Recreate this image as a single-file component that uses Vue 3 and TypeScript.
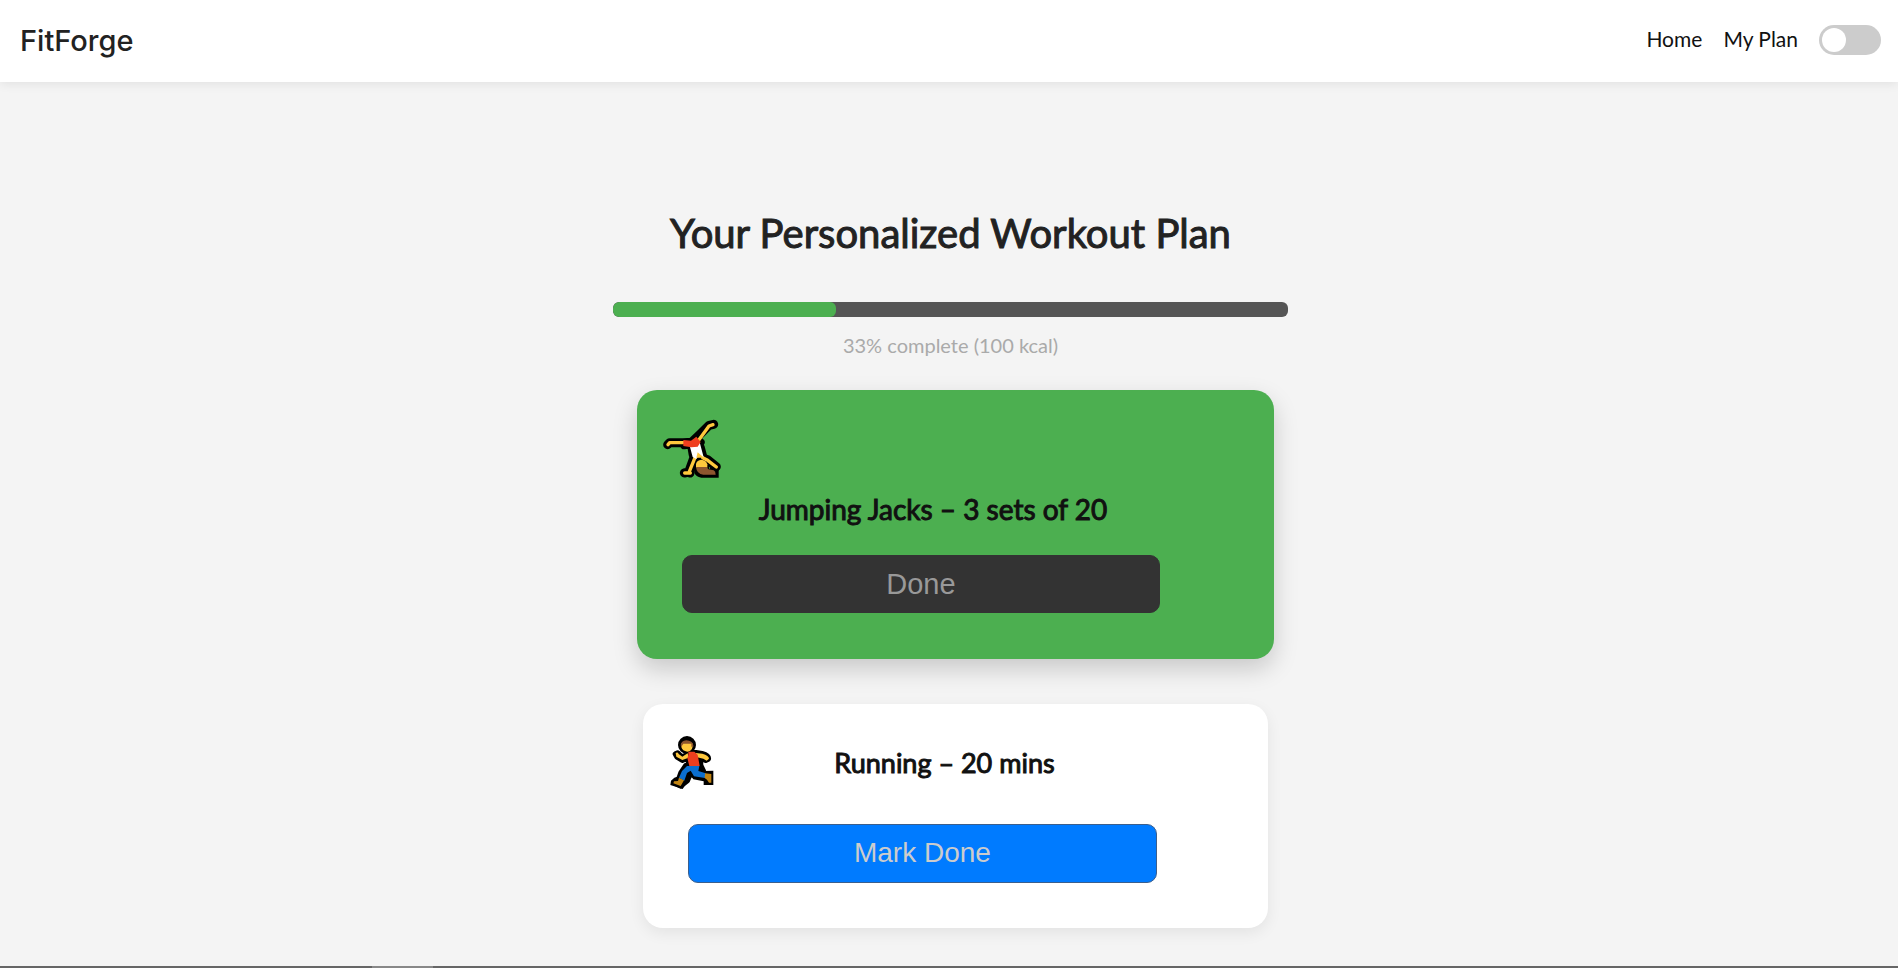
<script setup lang="ts">
import { ref } from 'vue'

interface Exercise {
  id: string
  title: string
  done: boolean
}

const dark = ref(false)
const percent = ref(33)
const calories = ref(100)
const exercises = ref<Exercise[]>([
  { id: 'jacks', title: 'Jumping Jacks – 3 sets of 20', done: true },
  { id: 'run', title: 'Running – 20 mins', done: false },
])
</script>

<template>
  <div class="page">
    <header class="topbar">
      <a class="brand" href="#">FitForge</a>
      <nav class="nav">
        <a href="#home">Home</a>
        <a href="#plan">My Plan</a>
        <input v-model="dark" class="switch" type="checkbox" role="switch" aria-label="Dark mode" />
      </nav>
    </header>

    <main class="plan">
      <h1>Your Personalized Workout Plan</h1>
      <div class="track" role="progressbar" aria-label="Workout progress" :aria-valuenow="percent">
        <div class="fill" :style="{ width: percent + '%' }"></div>
      </div>
      <p class="status">{{ percent }}% complete ({{ calories }} kcal)</p>

      <section class="cards">
        <article v-for="item in exercises" :key="item.id" class="card" :class="{ done: item.done }">
          <div class="head">
            <svg v-if="item.id === 'jacks'" class="figure cartwheel" viewBox="24 21 180 180" aria-hidden="true">
              <g fill="none" stroke="#000" stroke-linejoin="round" stroke-linecap="round">
                <path stroke-width="27" d="M38 98L44 92L84 92L110 91L136 66L162 40L176 37" />
                <path stroke-width="24" d="M88 100L112 96L129 84L137 91M108 98L113 128L122 135L145 135L137 105Z" />
                <path stroke-width="27" d="M116 139L101 180L88 183M105 183L107 170M141 137L158 143L184 164L178 169" />
                <circle cx="139" cy="162" r="18" stroke-width="13" />
              </g>
              <path fill="#000" d="M120 170H191V197H139Q122 194 118 182Z" />
              <g fill="none" stroke="#ffc83d" stroke-width="10" stroke-linejoin="round" stroke-linecap="round">
                <path d="M39 98L44 92H86M132 83L162 42L174 38" />
                <path d="M120 137L102 181M89 183H106M143 137L158 145L184 165" />
              </g>
              <path fill="#fff" d="M105 105L134 91L146 136L129 134L124 141L113 135Z" />
              <path fill="#ef3e1e" d="M85 84L108 86L124 74L137 90L128 104L109 106L85 102Z" />
              <path fill="#ffc83d" d="M124 137L128 121L147 137Z" />
              <circle cx="139" cy="162" r="17" fill="#000" />
              <path fill="#ffc83d" d="M123 165V156Q126 144 139 143Q153 144 157 157V167H123Z" />
              <path fill="#8e562e" d="M123 165H155L160 172L176 175Q182 178 182 188H145Q125 186 123 165Z" />
            </svg>
            <svg v-else class="figure runner" viewBox="30 30 135 165" aria-hidden="true">
              <g fill="#000" stroke="#000" stroke-width="16" stroke-linejoin="round">
                <circle cx="81" cy="60" r="19" />
                <path d="M46 87L53 84L65 96L83 89L85 83H108L126 86Q147 92 145 102L137 106L121 99L122 121L130 138L120 146L112 151L90 148L82 167L62 183L43 173L56 163L63 143L78 121L88 119L83 99L67 106L51 96Z" />
              </g>
              <path fill="#000" d="M43 158L60 152L82 170L68 192L31 180L33 167ZM102 126L130 138L160 137V180H131V169L100 163L90 150Z" />
              <path fill="#ffc83d" d="M64 56Q81 40 98 56V65Q95 79 82 80Q67 78 64 66ZM47 84Q53 80 56 87L67 95L83 85L86 98L67 105L49 95ZM107 84L127 86Q147 92 147 101L140 107L130 101L111 97Z" />
              <path fill="#8e562e" d="M62 61Q63 48 79 46Q98 47 100 61V65H94V56H70L64 65Z" />
              <path fill="#ef3e1e" d="M85 80H103L113 89L119 123H88L82 99L85 91Z" />
              <path fill="#0b6ed0" d="M81 123H118L115 138L137 145L135 159L102 154L92 137L81 144L73 167L57 158L66 138Z" />
              <path fill="#c18413" d="M57 158L72 166L62 183L40 175L42 169L54 168ZM135 145L154 147V173H147L141 164L134 159Z" />
            </svg>
            <h2>{{ item.title }}</h2>
          </div>
          <button type="button" class="action" @click="item.done = true">
            {{ item.done ? 'Done' : 'Mark Done' }}
          </button>
        </article>
      </section>
    </main>

    <footer class="edge"><span></span></footer>
  </div>
</template>

<style>
body {
  margin: 0;
  background: #f4f4f4;
}
</style>

<style scoped>
.page {
  display: flex;
  flex-direction: column;
  min-height: 100vh;
  color: #111;
  background: #f4f4f4;
  font-family: Lato, "Liberation Sans", sans-serif;
}

.topbar {
  display: flex;
  align-items: center;
  justify-content: space-between;
  height: 82px;
  padding: 0 17px 2px 20px;
  box-sizing: border-box;
  background: #fff;
  box-shadow: 0 2px 10px rgba(0, 0, 0, 0.08);
}

.topbar a {
  color: inherit;
  text-decoration: none;
}

.topbar .brand {
  color: #222;
  font-family: Inter, "Liberation Sans", sans-serif;
  font-size: 29px;
  font-weight: 500;
}

.nav {
  display: flex;
  align-items: center;
  gap: 21px;
  font-size: 21px;
}

.nav a {
  padding-bottom: 3px;
}

.switch {
  appearance: none;
  width: 62px;
  height: 30px;
  margin: 0;
  padding: 3px;
  border-radius: 15px;
  background: #ccc;
}

.switch::before {
  content: "";
  display: block;
  width: 24px;
  height: 24px;
  border-radius: 50%;
  background: #fff;
}

.switch:checked::before {
  margin-left: auto;
}

.plan {
  width: 100%;
  max-width: 675px;
  margin: 0 auto;
  padding: 126px 0 38px 3px;
}

h1,
h2,
p {
  margin: 0;
}

h1,
h2 {
  font-weight: 400;
  -webkit-text-stroke: 1px currentColor;
}

h1 {
  color: #222;
  font-size: 40px;
  line-height: 50px;
  text-align: center;
}

.track {
  height: 15px;
  margin-top: 44px;
  overflow: hidden;
  border-radius: 6px;
  background: #555;
}

.fill {
  height: 100%;
  border-radius: 6px;
  background: #4caf50;
}

.status {
  margin-top: 16px;
  color: #aaa;
  font-size: 20px;
  line-height: 24px;
  text-align: center;
}

.cards {
  display: flex;
  flex-direction: column;
  align-items: center;
  gap: 45px;
  margin-top: 33px;
  padding-left: 10px;
}

.card {
  width: 100%;
  max-width: 625px;
  padding: 31px 0 45px;
  box-sizing: border-box;
  border-radius: 20px;
  background: #fff;
  box-shadow: 0 5px 15px rgba(0, 0, 0, 0.07);
}

.head {
  display: flex;
  align-items: center;
  padding: 0 94px 0 27px;
}

.figure {
  display: block;
  flex: none;
}

.cartwheel {
  width: 60px;
  height: 60px;
}

.runner {
  width: 45px;
  height: 55px;
}

h2 {
  flex: 1;
  font-size: 27px;
  line-height: 36px;
  text-align: center;
}

.action {
  display: block;
  width: 75%;
  height: 59px;
  margin: 34px 0 0 45px;
  padding: 0 0 2px;
  border: 1px solid #3c5f8c;
  border-radius: 10px;
  background: #007bff;
  color: #ccc;
  font-family: "Liberation Sans", Arial, sans-serif;
  font-size: 28px;
}

.card.done {
  max-width: 637px;
  padding: 29px 0 46px;
  background: #4caf50;
  box-shadow: 0 10px 25px rgba(0, 0, 0, 0.18);
}

.done .head {
  flex-direction: column;
  align-items: stretch;
  gap: 12px;
  padding: 0 71px 0 26px;
}

.done h2 {
  font-size: 28px;
}

.done .action {
  height: 58px;
  margin-top: 28px;
  padding: 0;
  border-color: #333;
  background: #333;
  color: #999;
  font-size: 29px;
}

.edge {
  height: 2px;
  margin-top: auto;
  background: #666;
}

.edge span {
  display: block;
  width: 61px;
  height: 2px;
  margin-left: 372px;
  background: #888;
}
</style>
